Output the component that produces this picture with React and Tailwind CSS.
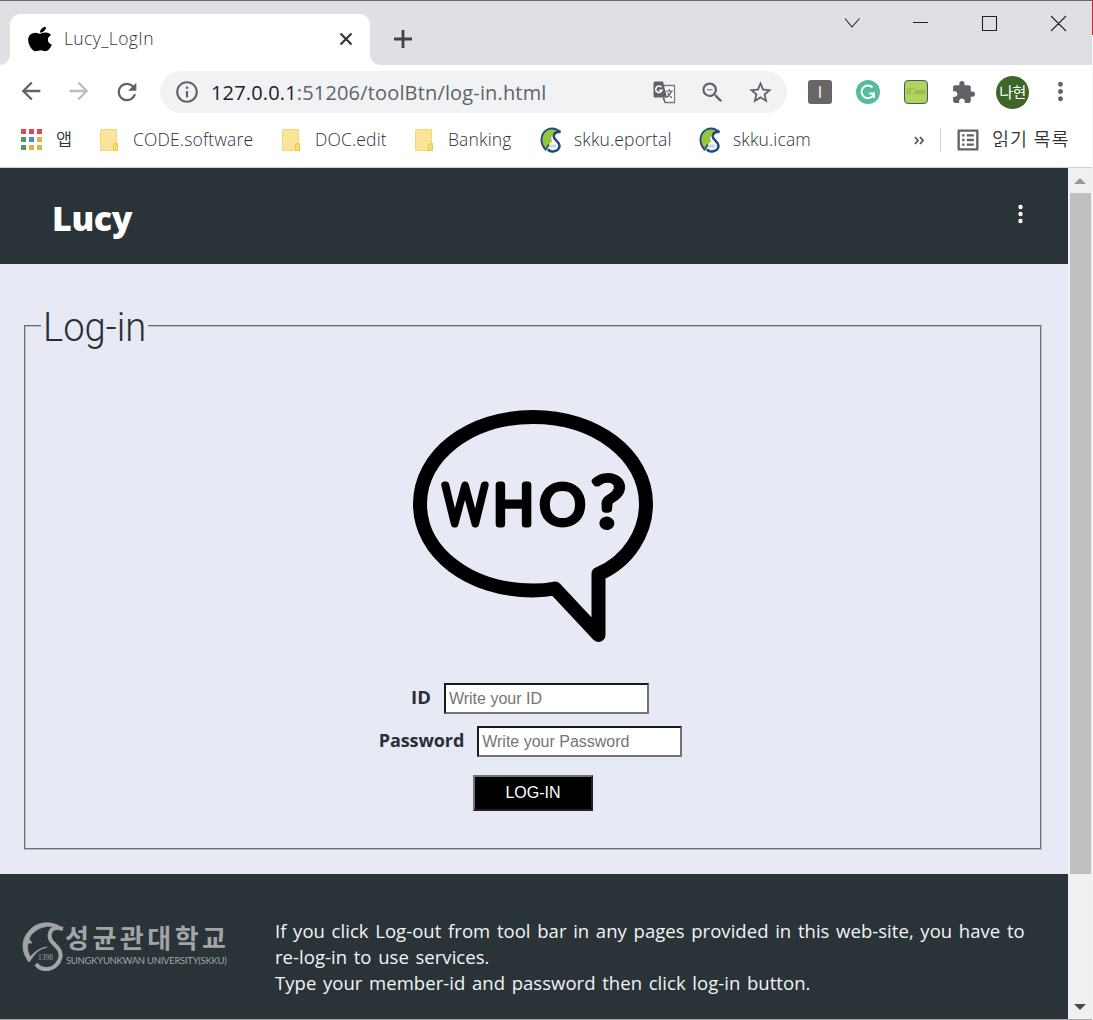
import { FaApple } from "react-icons/fa";
import { MdExtension, MdStarBorder, MdRefresh, MdArrowBack, MdArrowForward, MdMoreVert, MdOutlineInfo, MdZoomOut, MdOutlineListAlt } from "react-icons/md";

const ui = "font-['Open_Sans','Noto_Sans_CJK_KR',sans-serif]";

function Folder() {
  return (
    <svg width="20" height="24" viewBox="0 0 20 24" className="shrink-0">
      <path d="M1.500 2.500 2 1.500H17.500V15H18.500V22.500H1.500Z" fill="#fae499" stroke="#f1d877" />
      <path d="M14.500 22.500V17q0-1.500 2-1.500t2 1.500v5.500Z" fill="#f8dc6c" stroke="#e8c84c" />
    </svg>
  );
}

function Skku() {
  return (
    <svg width="22" height="26" viewBox="0 0 22 26" className="shrink-0">
      <path d="M19 3Q14 0 8 2.500 1 6 1.500 14 2 18 5 21L12 14.500Q10 9 14 6Z" fill="#93c83d" />
      <path d="M20.500 5Q14-.5 7.500 2.500 1 6 1.500 14 2 19 5.500 22.500L9 17.500" fill="none" stroke="#254b78" strokeWidth="1.900" />
      <path d="M20.500 5Q15 4 13.700 8.500C13 13 19.500 14 19.500 19 19 25 10 26 8 22" fill="none" stroke="#254b78" strokeWidth="2.600" />
      <path d="M9 17.500h7v3H9z" fill="#ccd5dd" />
    </svg>
  );
}

function Bookmark({ icon, children, className }) {
  return (
    <div className={"flex h-7 shrink-0 items-center " + className}>
      {icon}
      <span className="-mt-[2px] whitespace-nowrap">{children}</span>
    </div>
  );
}

function Apps() {
  const colors = ["#dc4b4b", "#dc4b4b", "#dc4b4b", "#4f9a62", "#4a86e8", "#e3b045", "#4f9a62", "#e3b045", "#e3b045"];
  return (
    <div className="-mt-[2px] grid grid-cols-3 gap-[3px]">
      {colors.map((c, i) => (
        <i key={i} className="size-[5px]" style={{ backgroundColor: c }} />
      ))}
    </div>
  );
}

function TabStrip() {
  return (
    <div className="flex h-[65px] border-t border-[#69676e] bg-[#dee0e4]">
      <div className="flex w-[10px] items-end">
        <div className="h-[10px] w-[10px] bg-[radial-gradient(circle_at_0_0,#dee0e4_9.500px,white_10px)]" />
      </div>
      <div className="mt-[13px] flex h-[51px] w-[360px] items-center rounded-t-[11px] bg-white pl-[16px]">
        <FaApple className="mb-[2px] size-[28px] scale-x-[1.15] text-black" />
        <span className="mb-[2px] ml-[10px] text-[17.500px] font-[350] tracking-[0.400px] text-[#35363a]">Lucy_LogIn</span>
        <svg width="14" height="14" className="mr-[17px] mb-px ml-auto" stroke="#35363a" strokeWidth="2.200"><path d="m1.500 1.500 11 11m0-11-11 11" /></svg>
      </div>
      <div className="flex w-[10px] items-end">
        <div className="h-[10px] w-[10px] bg-[radial-gradient(circle_at_100%_0,#dee0e4_9.500px,white_10px)]" />
      </div>
      <svg width="18" height="18" className="mt-[29px] ml-[14px]" stroke="#404247" strokeWidth="2.800"><path d="M9 0v18M0 9h18" /></svg>
      <svg width="224" height="18" className="mt-[13px] ml-auto mr-[25px]" fill="none" stroke="#222" strokeWidth="1.100">
        <path d="m2 4.500 7 8.500 7.500-8.500M70 8.500h15M139.500 2.500h14v14h-14zM208 2l15 15m0-15-15 15" />
      </svg>
    </div>
  );
}

function Toolbar() {
  return (
    <div className="flex h-[54px] items-center bg-white pl-[17px] text-[#5f6368]">
      <MdArrowBack className="size-[28px] -mt-[2px]" />
      <MdArrowForward className="-mt-[2px] ml-[20px] size-[28px] text-[#bbbcbf]" />
      <MdRefresh className="-mt-px ml-[20px] size-[28px]" />
      <div className="ml-[19px] flex h-[42px] w-[627px] items-center rounded-full bg-[#f0f2f4] pl-[14px]">
        <MdOutlineInfo className="size-[26px]" />
        <span className="mt-px ml-[11px] text-[20px] tracking-[0.160px] whitespace-nowrap"><span className="text-[#202124]">127.0.0.1</span>:51206/toolBtn/log-in.html</span>
        <svg width="23" height="23" viewBox="0 0 23 23" className="ml-auto">
          <path d="M8 4.500h13.500v17H12Z" fill="white" stroke="#77797d" strokeWidth="1.300" />
          <path d="M2 .5h8l4 16H2q-1.500 0-1.500-1.500V2Q.5.500 2 .5Z" fill="#5f6368" />
          <path d="M8.500 6.300a3.200 3.200 0 1 0 .5 3H6.200" fill="none" stroke="white" strokeWidth="1.600" />
          <path d="M12.500 10h7.500m-3.700-2v2m2.200 0q-1 4-5 6.500m1-5q2 3.500 4.500 5.500M10 17l2 4" fill="none" stroke="#5f6368" strokeWidth="1.200" />
        </svg>
        <MdZoomOut className="ml-[23px] size-[27px]" />
        <MdStarBorder className="mr-[13px] ml-[21px] size-[27px]" />
      </div>
      <div className="ml-[21px] flex size-[24px] items-center justify-center rounded-[3px] bg-[#686667] text-[16px] leading-none text-white">I</div>
      <svg width="24" height="24" viewBox="0 0 24 24" className="ml-[24px]">
        <circle cx="12" cy="12" r="12" fill="#55bd9b" />
        <path d="M16.500 7.500A6.300 6.300 0 1 0 17.800 14M13 13.500h5V18" fill="none" stroke="white" strokeWidth="2" />
      </svg>
      <div className="ml-[24px] flex size-[24px] items-center justify-center rounded-[4px] border border-[#355f68] bg-[#b4d25b] font-['Liberation_Serif',serif] text-[9px] text-[#879f4b]">iCam</div>
      <MdExtension className="ml-[23px] size-[25px]" />
      <div className="ml-[20px] flex size-[33px] items-center justify-center rounded-full bg-[#3d6628] text-[15px] leading-none tracking-[-0.500px] text-white">나현</div>
      <MdMoreVert className="-mt-px ml-[17px] size-[29px]" />
    </div>
  );
}

function Bookmarks() {
  return (
    <div className="flex h-[49px] border-b border-[#cfd0d3] bg-white pt-[7px] pl-[21px] text-[17.500px] font-[350] tracking-[0.150px] text-[#303238]">
      <Bookmark className="w-[78px] gap-[14px]" icon={<Apps />}>앱</Bookmark>
      <Bookmark className="w-[182px] gap-[14px]" icon={<Folder />}>CODE.software</Bookmark>
      <Bookmark className="w-[133px] gap-[14px]" icon={<Folder />}>DOC.edit</Bookmark>
      <Bookmark className="w-[126px] gap-[14px]" icon={<Folder />}>Banking</Bookmark>
      <Bookmark className="w-[159px] gap-[12px]" icon={<Skku />}>skku.eportal</Bookmark>
      <Bookmark className="gap-[12px]" icon={<Skku />}>skku.icam</Bookmark>
      <div className="mr-[21px] ml-auto flex h-7 items-center">
        <svg width="10" height="9" fill="none" stroke="#555" strokeWidth="1.800"><path d="m1 1 3 3.500L1 8M6 1l3 3.500L6 8" /></svg>
        <div className="ml-[16px] h-[24px] w-px bg-[#d0d1d4]" />
        <MdOutlineListAlt className="ml-[13px] size-[28px] text-[#5f6368]" />
        <span className="-mt-[3px] ml-[10px] w-[79px] text-[18.500px] tracking-[0.900px] whitespace-nowrap">읽기 목록</span>
      </div>
    </div>
  );
}

function WhoBubble() {
  return (
    <svg width="242" height="234" viewBox="412 409 242 234" className="mx-auto">
      <path d="M598.500 574C629 561 646 532 646 504 646 455 596 417 533 417S420 455 420 504 470 590.500 533 590.500Q545 590.500 555 588.500L598.500 635Z" fill="none" stroke="black" strokeWidth="14" strokeLinejoin="round" />
      <text y="523.500" fill="black" stroke="black" strokeWidth="7" strokeLinejoin="round" fontFamily="Lato, sans-serif" fontWeight="300" fontSize="55">
        <tspan x="443" textLength="44" lengthAdjust="spacingAndGlyphs">W</tspan>
        <tspan x="493.500" textLength="40" lengthAdjust="spacingAndGlyphs">H</tspan>
        <tspan x="540" textLength="45" lengthAdjust="spacingAndGlyphs">O</tspan>
        <tspan x="592" y="525.500" fontSize="68" textLength="33" lengthAdjust="spacingAndGlyphs">?</tspan>
      </text>
    </svg>
  );
}

function LoginForm() {
  const field = "mt-px h-[31px] w-[205px] border-2 border-t-[#1b1b1f] border-l-[#1b1b1f] border-r-[#717377] border-b-[#717377] bg-white px-[3px] font-['Liberation_Sans',Arial,sans-serif] text-[16px] font-normal text-black placeholder:text-[#757575]";
  return (
    <fieldset className="mx-6 mr-[26px] h-[544px] border-2 border-[#c0c0c0] px-0 [border-style:groove]">
      <legend className="ml-[15px] h-[40px] w-[107px] px-[2px] font-['Roboto',sans-serif] text-[40px] leading-[44px] font-light whitespace-nowrap text-[#292f36]"><span className="inline-block origin-left scale-x-[0.955]">Log-in</span></legend>
      <div className="flex flex-col items-center pt-[63px] text-[18px] font-bold text-[#292f36]">
        <WhoBubble />
        <label className="mt-[39px] mr-[6px] flex h-[32px] items-center gap-[13px]"><span className="-mt-[2px] text-[18.500px]">ID</span><input className={field} placeholder="Write your ID" /></label>
        <label className="mt-[11px] mr-[5px] flex h-[32px] items-center gap-[13px]"><span className="-mt-px tracking-[-0.100px]">Password</span><input className={field} placeholder="Write your Password" /></label>
        <button className="mt-[18px] h-[36px] w-[120px] border-2 border-t-[#717377] border-l-[#717377] border-r-[#222225] border-b-[#222225] bg-black font-['Liberation_Sans',Arial,sans-serif] text-[16px] font-normal text-white">LOG-IN</button>
      </div>
    </fieldset>
  );
}

function University() {
  return (
    <div className="mt-[47px] ml-[21px] flex h-[50px] w-[254px] shrink-0 text-[#a2a5a8]">
      <svg width="44" height="50" viewBox="0 0 44 50" fill="none" stroke="currentColor">
        <path d="M42 8C34 0 17-1 8 10-1 20 1 32 8 41L14 33Q18 28 26 26Q17 27 9 36Q5 28 7 22L11 22 8 18Q9 14 13 11Q25 1 42 8Z" fill="currentColor" strokeWidth="0.800" />
        <path d="M42 8Q31 5 29 12C26 23 41 24 39.500 36 36 50 21 51 15 43" strokeWidth="4" />
        <text x="17" y="39" fill="currentColor" stroke="none" fontFamily="Liberation Serif" fontSize="7.500">1398</text>
      </svg>
      <div className="flex flex-col whitespace-nowrap">
        <span className="h-[34px] text-[26px] leading-[35px] font-bold tracking-[3.500px]">성균관대학교</span>
        <span className="mt-px ml-px font-['Lato',sans-serif] text-[9.500px] leading-[10px] tracking-[-0.280px]">SUNGKYUNKWAN UNIVERSITY(SKKU)</span>
      </div>
    </div>
  );
}

function Scrollbar() {
  return (
    <div className="flex w-[24px] shrink-0 flex-col items-center bg-[#f0f0f0]">
      <svg width="12" height="6" className="mt-[10px]"><path d="M6 0l6 6H0z" fill="#9b9b9b" /></svg>
      <div className="mt-[9px] h-[681px] w-[21px] bg-[#c0c0c0]" />
      <svg width="12" height="6" className="mt-auto mb-[9px]"><path d="M6 6l6-6H0z" fill="#484848" /></svg>
    </div>
  );
}

export default function App() {
  return (
    <div className={"flex h-[1020px] w-[1093px] overflow-hidden bg-[#f4f4f4] " + ui}>
      <div className="w-[1092px] shrink-0">
        <TabStrip />
        <Toolbar />
        <Bookmarks />
        <div className="flex h-[852px] border-b border-[#a9a9ab]">
          <main className="w-[1068px] bg-[#e7e9f5]">
            <header className="flex h-[96px] justify-between bg-[#2a3337] pr-[44px] pl-[52px] text-white">
              <h1 className="mt-[26px] font-['Noto_Sans',sans-serif] text-[34px] leading-[48px] font-black tracking-[-0.400px]">Lucy</h1>
              <svg width="7" height="20" viewBox="0 0 7 20" className="mt-[36px]" fill="white"><circle cx="3.500" cy="3" r="2.200" /><circle cx="3.500" cy="10" r="2.200" /><circle cx="3.500" cy="17" r="2.200" /></svg>
            </header>
            <section className="h-[610px] pt-[42px]"><LoginForm /></section>
            <footer className="flex h-[145px] bg-[#2a3337] text-[#f1f3f7]">
              <University />
              <p className="mt-[44px] text-[18.500px] leading-[26px] tracking-[0.040px] whitespace-nowrap [word-spacing:1.800px]">If you click Log-out from tool bar in any pages provided in this web-site, you have to<br />re-log-in to use services.<br />Type your member-id and password then click log-in button.</p>
            </footer>
          </main>
          <Scrollbar />
        </div>
      </div>
      <div className="w-px"><div className="h-[35px] bg-[#cf2030]" /></div>
    </div>
  );
}
